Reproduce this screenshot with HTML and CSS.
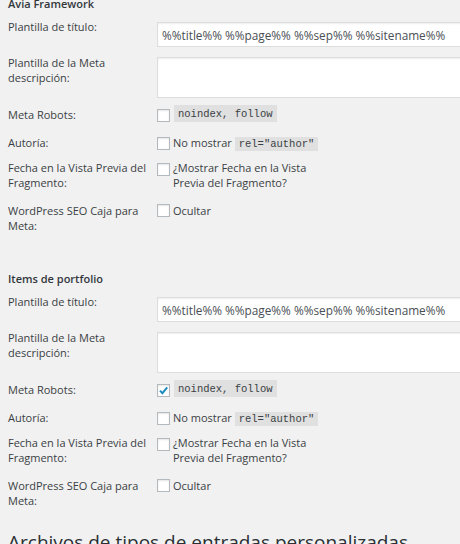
FILE: index.html
```html
<!DOCTYPE html>
<html lang="es">
<head>
<meta charset="utf-8">
<title>Títulos y Metas</title>
<link rel="stylesheet" href="styles.css">
</head>
<body>
<div class="wrap">
  <section class="group">
    <h3 class="group-title">Avia Framework</h3>
    <div class="row row-title">
      <label class="label">Plantilla de título:</label>
      <div class="field"><input class="text" type="text" value="%%title%% %%page%% %%sep%% %%sitename%%"></div>
    </div>
    <div class="row row-desc">
      <label class="label">Plantilla de la Meta descripción:</label>
      <div class="field"><textarea class="area"></textarea></div>
    </div>
    <div class="row row-robots">
      <span class="label">Meta Robots:</span>
      <div class="field check"><span class="box"></span><code class="code code-lone">noindex, follow</code></div>
    </div>
    <div class="row row-author">
      <span class="label">Autoría:</span>
      <div class="field check"><span class="box"></span><span class="opt">No mostrar <code class="code">rel="author"</code></span></div>
    </div>
    <div class="row row-date">
      <span class="label">Fecha en la Vista Previa del Fragmento:</span>
      <div class="field check"><span class="box"></span><span class="opt opt-wrap">¿Mostrar Fecha en la Vista Previa del Fragmento?</span></div>
    </div>
    <div class="row row-seo">
      <span class="label">WordPress SEO Caja para Meta:</span>
      <div class="field check"><span class="box"></span><span class="opt">Ocultar</span></div>
    </div>
  </section>

  <section class="group">
    <h3 class="group-title">Items de portfolio</h3>
    <div class="row row-title">
      <label class="label">Plantilla de título:</label>
      <div class="field"><input class="text" type="text" value="%%title%% %%page%% %%sep%% %%sitename%%"></div>
    </div>
    <div class="row row-desc">
      <label class="label">Plantilla de la Meta descripción:</label>
      <div class="field"><textarea class="area"></textarea></div>
    </div>
    <div class="row row-robots">
      <span class="label">Meta Robots:</span>
      <div class="field check"><span class="box box-on"><svg viewBox="0 0 13 13" width="13" height="13"><path d="M3 6.6 L5.4 9.2 L10.2 3.4" fill="none" stroke="#1e8cbe" stroke-width="2"/></svg></span><code class="code code-lone">noindex, follow</code></div>
    </div>
    <div class="row row-author">
      <span class="label">Autoría:</span>
      <div class="field check"><span class="box"></span><span class="opt">No mostrar <code class="code">rel="author"</code></span></div>
    </div>
    <div class="row row-date">
      <span class="label">Fecha en la Vista Previa del Fragmento:</span>
      <div class="field check"><span class="box"></span><span class="opt opt-wrap">¿Mostrar Fecha en la Vista Previa del Fragmento?</span></div>
    </div>
    <div class="row row-seo">
      <span class="label">WordPress SEO Caja para Meta:</span>
      <div class="field check"><span class="box"></span><span class="opt">Ocultar</span></div>
    </div>
  </section>

  <h2 class="big-title">Archivos de tipos de entradas personalizadas</h2>
</div>
</body>
</html>
```

FILE: styles.css
```css
html, body {
  margin: 0;
  padding: 0;
}

body {
  background: #f1f1f1;
  color: #2b2f33;
  font-family: "Open Sans", "Noto Sans", sans-serif;
  font-size: 11px;
  line-height: 15px;
  overflow: hidden;
  width: 460px;
  height: 544px;
}

.wrap {
  padding-left: 8px;
  margin-top: -4px;
}

.group + .group {
  margin-top: 38px;
}

.group-title {
  margin: 0;
  font-size: 11px;
  line-height: 15px;
  font-weight: 600;
  color: #32373c;
}

.row {
  display: grid;
  grid-template-columns: 141px 1fr;
  column-gap: 8px;
  align-items: start;
}

.label {
  display: block;
  color: #3a3f44;
}

.field {
  min-width: 0;
}

.check {
  display: flex;
  align-items: flex-start;
  gap: 3px;
  color: #3a3f44;
}

.text,
.area {
  display: block;
  box-sizing: border-box;
  width: 330px;
  margin: 0;
  border: 1px solid #ddd;
  background: #fff;
  box-shadow: inset 0 1px 2px rgba(0, 0, 0, 0.07);
  font-family: "Open Sans", "Noto Sans", sans-serif;
  color: #4a4f54;
  outline: none;
}

.text {
  height: 25px;
  padding: 0 4px;
  font-size: 11.8px;
}

.area {
  height: 41px;
  resize: none;
  padding: 2px 4px;
}

.box {
  flex: none;
  display: block;
  box-sizing: border-box;
  width: 13px;
  height: 13px;
  border: 1px solid #b4b9be;
  background: #fff;
  box-shadow: inset 0 1px 2px rgba(0, 0, 0, 0.1);
}

.box svg {
  display: block;
  margin: -1px 0 0 -1px;
}

.code {
  font-family: "Liberation Mono", "DejaVu Sans Mono", monospace;
  font-size: 10.5px;
  line-height: 14px;
  padding: 1px 4px;
  background: #e5e5e5;
  background: rgba(0, 0, 0, 0.07);
  color: #3a3f44;
}

.code-lone {
  display: block;
  margin-left: 1px;
  line-height: 16px;
  padding: 1px 4px 0;
}

.opt-wrap {
  max-width: 140px;
}

/* row spacing */
.row-title {
  margin-top: 7px;
}
.row-title .label {
  padding-top: 1px;
}
.row-title .text {
  margin-top: 4px;
}

.row-desc {
  margin-top: 8px;
}
.row-desc .area {
  margin-top: 2px;
}

.row-robots {
  margin-top: 7px;
}
.row-robots .label {
  padding-top: 2px;
}
.row-robots .box {
  margin-top: 4px;
}

.row-author {
  margin-top: 13px;
}
.row-author .box {
  margin-top: 2px;
}

.row-date {
  margin-top: 9px;
}
.row-date .box {
  margin-top: 3px;
}

.row-seo {
  margin-top: 13px;
}
.row-seo .box {
  margin-top: 1px;
}

.big-title {
  margin: 21px 0 0;
  font-size: 19px;
  line-height: 26px;
  font-weight: 400;
  color: #2b2f33;
  white-space: nowrap;
}
```
